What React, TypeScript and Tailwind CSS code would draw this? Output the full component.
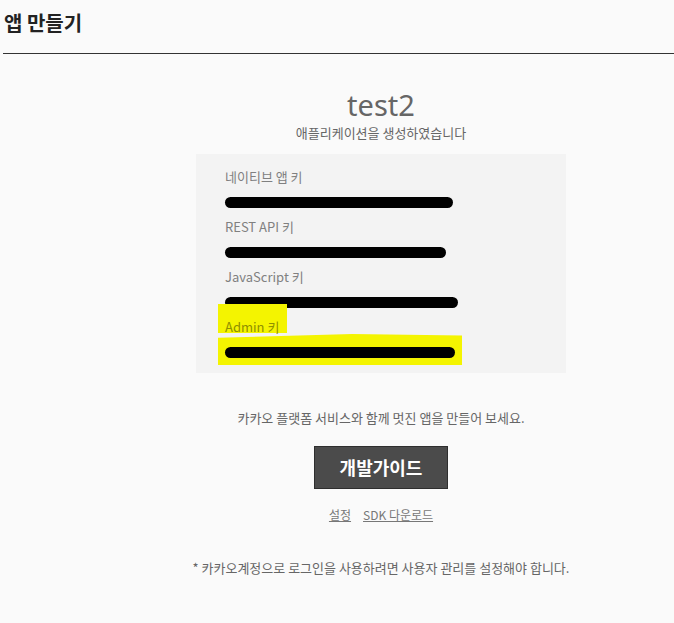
import React from "react";

const kr = { fontFamily: '"Noto Sans CJK KR", "Noto Sans", sans-serif' };

function Row({ label, width, highlight }: { label: string; width: number; highlight?: boolean }) {
  return (
    <div className="relative h-[50px]">
      {highlight && (
        <>
          <div className="absolute left-[-7px] top-[-13px] h-[29px] w-[69px] bg-[#f4f400]" />
          <div className="absolute left-[-7px] top-[17px] h-[31px] w-[244px] bg-[#f4f400] [clip-path:polygon(0_12%,55%_0,100%_5%,100%_100%,0_100%)]" />
        </>
      )}
      <div
        className={`relative text-[13px] leading-[20px] ${highlight ? "text-[#8f8f00]" : "text-[#808080]"}`}
        style={kr}
      >
        {label}
      </div>
      <div className="relative mt-[10px] h-[11px] rounded-full bg-black" style={{ width }} />
    </div>
  );
}

export default function App() {
  return (
    <div className="min-h-[623px] w-[674px] bg-[#fafafa] text-[#666]" style={kr}>
      <div className="px-[4px] pt-[9px]">
        <h1 className="text-[20px] font-bold leading-[28px] text-[#222]">앱 만들기</h1>
      </div>
      <div className="ml-[3px] mt-[16px] h-px bg-[#333]" />
      <div className="ml-[188px] flex w-[386px] flex-col items-center">
        <div
          className="mt-[33px] text-[29px] font-normal leading-[36px] text-[#666]"
          style={{ fontFamily: '"Noto Sans", sans-serif' }}
        >
          test2
        </div>
        <div className="mt-[1px] text-[13px] leading-[18px] text-[#666]">애플리케이션을 생성하였습니다</div>
        <div className="mt-[12px] w-[370px] bg-[#f3f3f3] pb-[6px] pl-[29px] pt-[13px]">
          <Row label="네이티브 앱 키" width={228} />
          <Row label="REST API 키" width={221} />
          <Row label="JavaScript 키" width={233} />
          <Row label="Admin 키" width={230} highlight />
        </div>
        <div className="mt-[35px] text-[13px] leading-[20px] text-[#666]">
          카카오 플랫폼 서비스와 함께 멋진 앱을 만들어 보세요.
        </div>
        <button className="mt-[18px] flex h-[43px] w-[134px] items-center justify-center border border-[#2e2e2e] bg-[#4b4b4b] text-[18px] font-bold text-white">
          개발가이드
        </button>
        <div className="mt-[17px] flex gap-[12px] text-[12px] leading-[18px] text-[#777]">
          <span className="underline">설정</span>
          <span className="underline">SDK 다운로드</span>
        </div>
        <div className="mt-[35px] whitespace-nowrap text-[13px] leading-[18px] text-[#666]">
          * 카카오계정으로 로그인을 사용하려면 사용자 관리를 설정해야 합니다.
        </div>
      </div>
    </div>
  );
}
